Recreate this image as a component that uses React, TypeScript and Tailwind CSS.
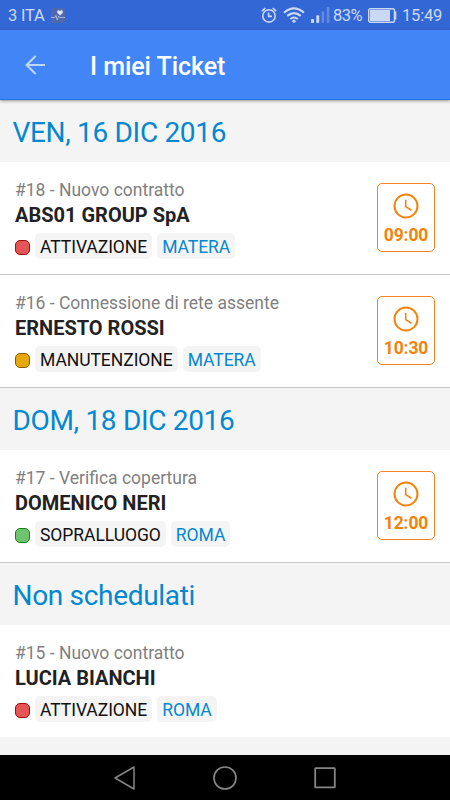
import clsx from 'clsx';

type Ticket = {
  id: number;
  subject: string;
  customer: string;
  type: string;
  city: string;
  status: 'red' | 'amber' | 'green';
  time?: string;
};

type Section = {
  title: string;
  tickets: Ticket[];
};

const sections: Section[] = [
  {
    title: 'VEN, 16 DIC 2016',
    tickets: [
      { id: 18, subject: 'Nuovo contratto', customer: 'ABS01 GROUP SpA', type: 'ATTIVAZIONE', city: 'MATERA', status: 'red', time: '09:00' },
      { id: 16, subject: 'Connessione di rete assente', customer: 'ERNESTO ROSSI', type: 'MANUTENZIONE', city: 'MATERA', status: 'amber', time: '10:30' }
    ]
  },
  {
    title: 'DOM, 18 DIC 2016',
    tickets: [
      { id: 17, subject: 'Verifica copertura', customer: 'DOMENICO NERI', type: 'SOPRALLUOGO', city: 'ROMA', status: 'green', time: '12:00' }
    ]
  },
  {
    title: 'Non schedulati',
    tickets: [
      { id: 15, subject: 'Nuovo contratto', customer: 'LUCIA BIANCHI', type: 'ATTIVAZIONE', city: 'ROMA', status: 'red' }
    ]
  }
];

const statusColors = {
  red: 'bg-[#e55555] border-[#9c1010]',
  amber: 'bg-[#e6a80c] border-[#8a5a0a]',
  green: 'bg-[#6fc56f] border-[#178017]'
};

function StatusBar() {
  return (
    <div className="flex h-[30px] items-center bg-[#3367d6] pl-2 pr-[8px] text-[16.5px] text-[#ccd9f5]">
      <span className="w-[36px] whitespace-nowrap pt-px leading-[30px] tracking-[-0.2px]">3 ITA</span>
      {/* Health app notification */}
      <svg className="ml-[7px]" width="14" height="15" viewBox="0 0 14 15">
        <rect width="14" height="15" rx="2" fill="#5068ad" />
        <path d="M9 7.6 6.4 4.9C5.2 3.2 7.6 1.2 9 3c1.4-1.8 3.8.2 2.6 1.9z" fill="#dce4f7" />
        <path d="M0 9.5h3.8l1.2-2 1.2 4.5 1.4-4 1 1.5H14" fill="none" stroke="#b6c3e6" strokeWidth=".8" />
      </svg>
      <div className="ml-auto flex items-center">
        <svg width="16" height="16" viewBox="0 0 16 16" fill="none" stroke="currentColor" strokeWidth="1.6">
          <circle cx="8" cy="8.9" r="6.2" />
          <path d="M7.6 5.5v3.9h3.4M.8 4.1 4.3 1.1M15.2 4.1l-3.5-3" />
        </svg>
        <svg className="ml-[6px]" width="22" height="16" viewBox="0 0 22 16" fill="none" stroke="currentColor" strokeWidth="2.1">
          <path d="M1 5.7Q11-2.8 21 5.7M4.2 8.9q6.8-5.6 13.6 0M7.3 12q3.7-3 7.4 0" />
          <circle cx="11" cy="14.2" r="1.6" fill="currentColor" stroke="none" />
        </svg>
        <svg className="ml-[6px]" width="19" height="16" viewBox="0 0 19 16" fill="currentColor">
          <rect x="0" y="12" width="3" height="4" rx=".8" />
          <rect x="5.3" y="8.2" width="2.9" height="7.8" rx=".8" />
          <rect x="10.6" y="4.2" width="2.6" height="11.8" rx=".8" opacity=".3" />
          <rect x="15.7" y="0" width="2.6" height="16" rx=".8" opacity=".3" />
        </svg>
        <span className="ml-[3px] w-[30px] whitespace-nowrap pt-px leading-[30px] tracking-[-0.5px]">83%</span>
        <svg className="ml-[5px]" width="29" height="15" viewBox="0 0 29 15">
          <rect x=".7" y=".7" width="25.8" height="13.6" rx="1.8" fill="none" stroke="currentColor" strokeWidth="1.4" />
          <rect x="2" y="2" width="20" height="11" fill="currentColor" />
          <path d="M27 3.5h1.3v8H27z" fill="currentColor" />
        </svg>
        <span className="ml-[5px] w-[40px] whitespace-nowrap pt-px leading-[30px] tracking-[-0.2px]">15:49</span>
      </div>
    </div>
  );
}

function AppBar() {
  return (
    <header className="relative z-10 flex h-[70px] items-center border-b border-[#1c72e8] bg-[#4285f6] pl-[25px] shadow-[0_1px_3px_rgba(60,50,20,0.5)]">
      <svg width="21" height="20" viewBox="0 0 21 20" fill="none" stroke="#bcd8f8" strokeWidth="2">
        <path d="M20 10H1.8M10.6 1 1.6 10l9 9" />
      </svg>
      <h1 className="ml-[44px] pt-[5px] text-[25px] font-medium tracking-[-0.05px] text-white">I miei Ticket</h1>
    </header>
  );
}

function TimeBox({ time }: { time: string }) {
  return (
    <div className="mt-[21px] flex h-[69px] w-[58px] flex-col items-center rounded-[5px] border border-[#f5811f] pt-[9px] text-[#f5820b]">
      <svg width="26" height="26" viewBox="0 0 26 26" fill="none" stroke="currentColor">
        <circle cx="13" cy="13" r="11.5" strokeWidth="2" />
        <path d="M12.7 6.8v6.8l5.8 3.6" strokeWidth="1.6" />
      </svg>
      <span className="mt-[5px] text-[17.5px] font-bold leading-[22px] tracking-[-0.1px]">{time}</span>
    </div>
  );
}

function TicketRow({ ticket, last }: { ticket: Ticket; last: boolean }) {
  return (
    <li className={clsx('flex justify-between bg-white pl-[15px] pr-[15px]', last ? 'h-[112px]' : 'h-[113px] border-b border-[#c8c8c8]')}>
      <div className="pt-[17px]">
        <p className="text-[17.5px] leading-[22px] text-[#808080]">#{ticket.id} - {ticket.subject}</p>
        <p className="mt-px text-[20px] font-bold leading-[26px] text-[#222]">{ticket.customer}</p>
        <div className="mt-[5px] flex items-center text-[17.5px] leading-[24px] tracking-[-0.05px]">
          <span className={clsx('mt-[3px] h-[15px] w-[15px] rounded-[5px] border', statusColors[ticket.status])} />
          <span className="ml-[5px] rounded-[5px] bg-[#f4f4f4] px-[5px] pt-[2px] text-[#111]">{ticket.type}</span>
          <span className="ml-[5px] rounded-[5px] bg-[#f4f4f4] px-[5px] pt-[2px] text-[#0288d1]">{ticket.city}</span>
        </div>
      </div>
      {ticket.time && <TimeBox time={ticket.time} />}
    </li>
  );
}

function NavigationBar() {
  return (
    <div className="flex h-[45px] items-center justify-center gap-[76px] bg-black text-[#858585]">
      <svg width="24" height="24" viewBox="0 0 24 24" fill="none" stroke="currentColor" strokeWidth="1.5" strokeLinejoin="round">
        <path d="M21 1v22L2 12z" />
      </svg>
      <svg width="24" height="24" viewBox="0 0 24 24" fill="none" stroke="currentColor" strokeWidth="1.7">
        <circle cx="12" cy="12" r="11" />
      </svg>
      <svg width="24" height="24" viewBox="0 0 24 24" fill="none" stroke="currentColor" strokeWidth="1.8">
        <rect x="2.2" y="2.2" width="19.6" height="19.2" rx=".5" />
      </svg>
    </div>
  );
}

export default function App() {
  return (
    <div className="flex h-[800px] w-[450px] flex-col overflow-hidden bg-[#f4f4f4] font-['Roboto',sans-serif]">
      <StatusBar />
      <AppBar />
      <main className="flex-1">
        {sections.map((section, i) => (
          <section key={section.title}>
            <h2 className="flex h-[62px] items-center pl-[12.5px] pt-[4px] text-[28px] tracking-[-0.32px] text-[#0288d1]">{section.title}</h2>
            <ul>
              {section.tickets.map((ticket, j) => (
                <TicketRow
                  key={ticket.id}
                  ticket={ticket}
                  last={i === sections.length - 1 && j === section.tickets.length - 1}
                />
              ))}
            </ul>
          </section>
        ))}
      </main>
      <NavigationBar />
    </div>
  );
}
